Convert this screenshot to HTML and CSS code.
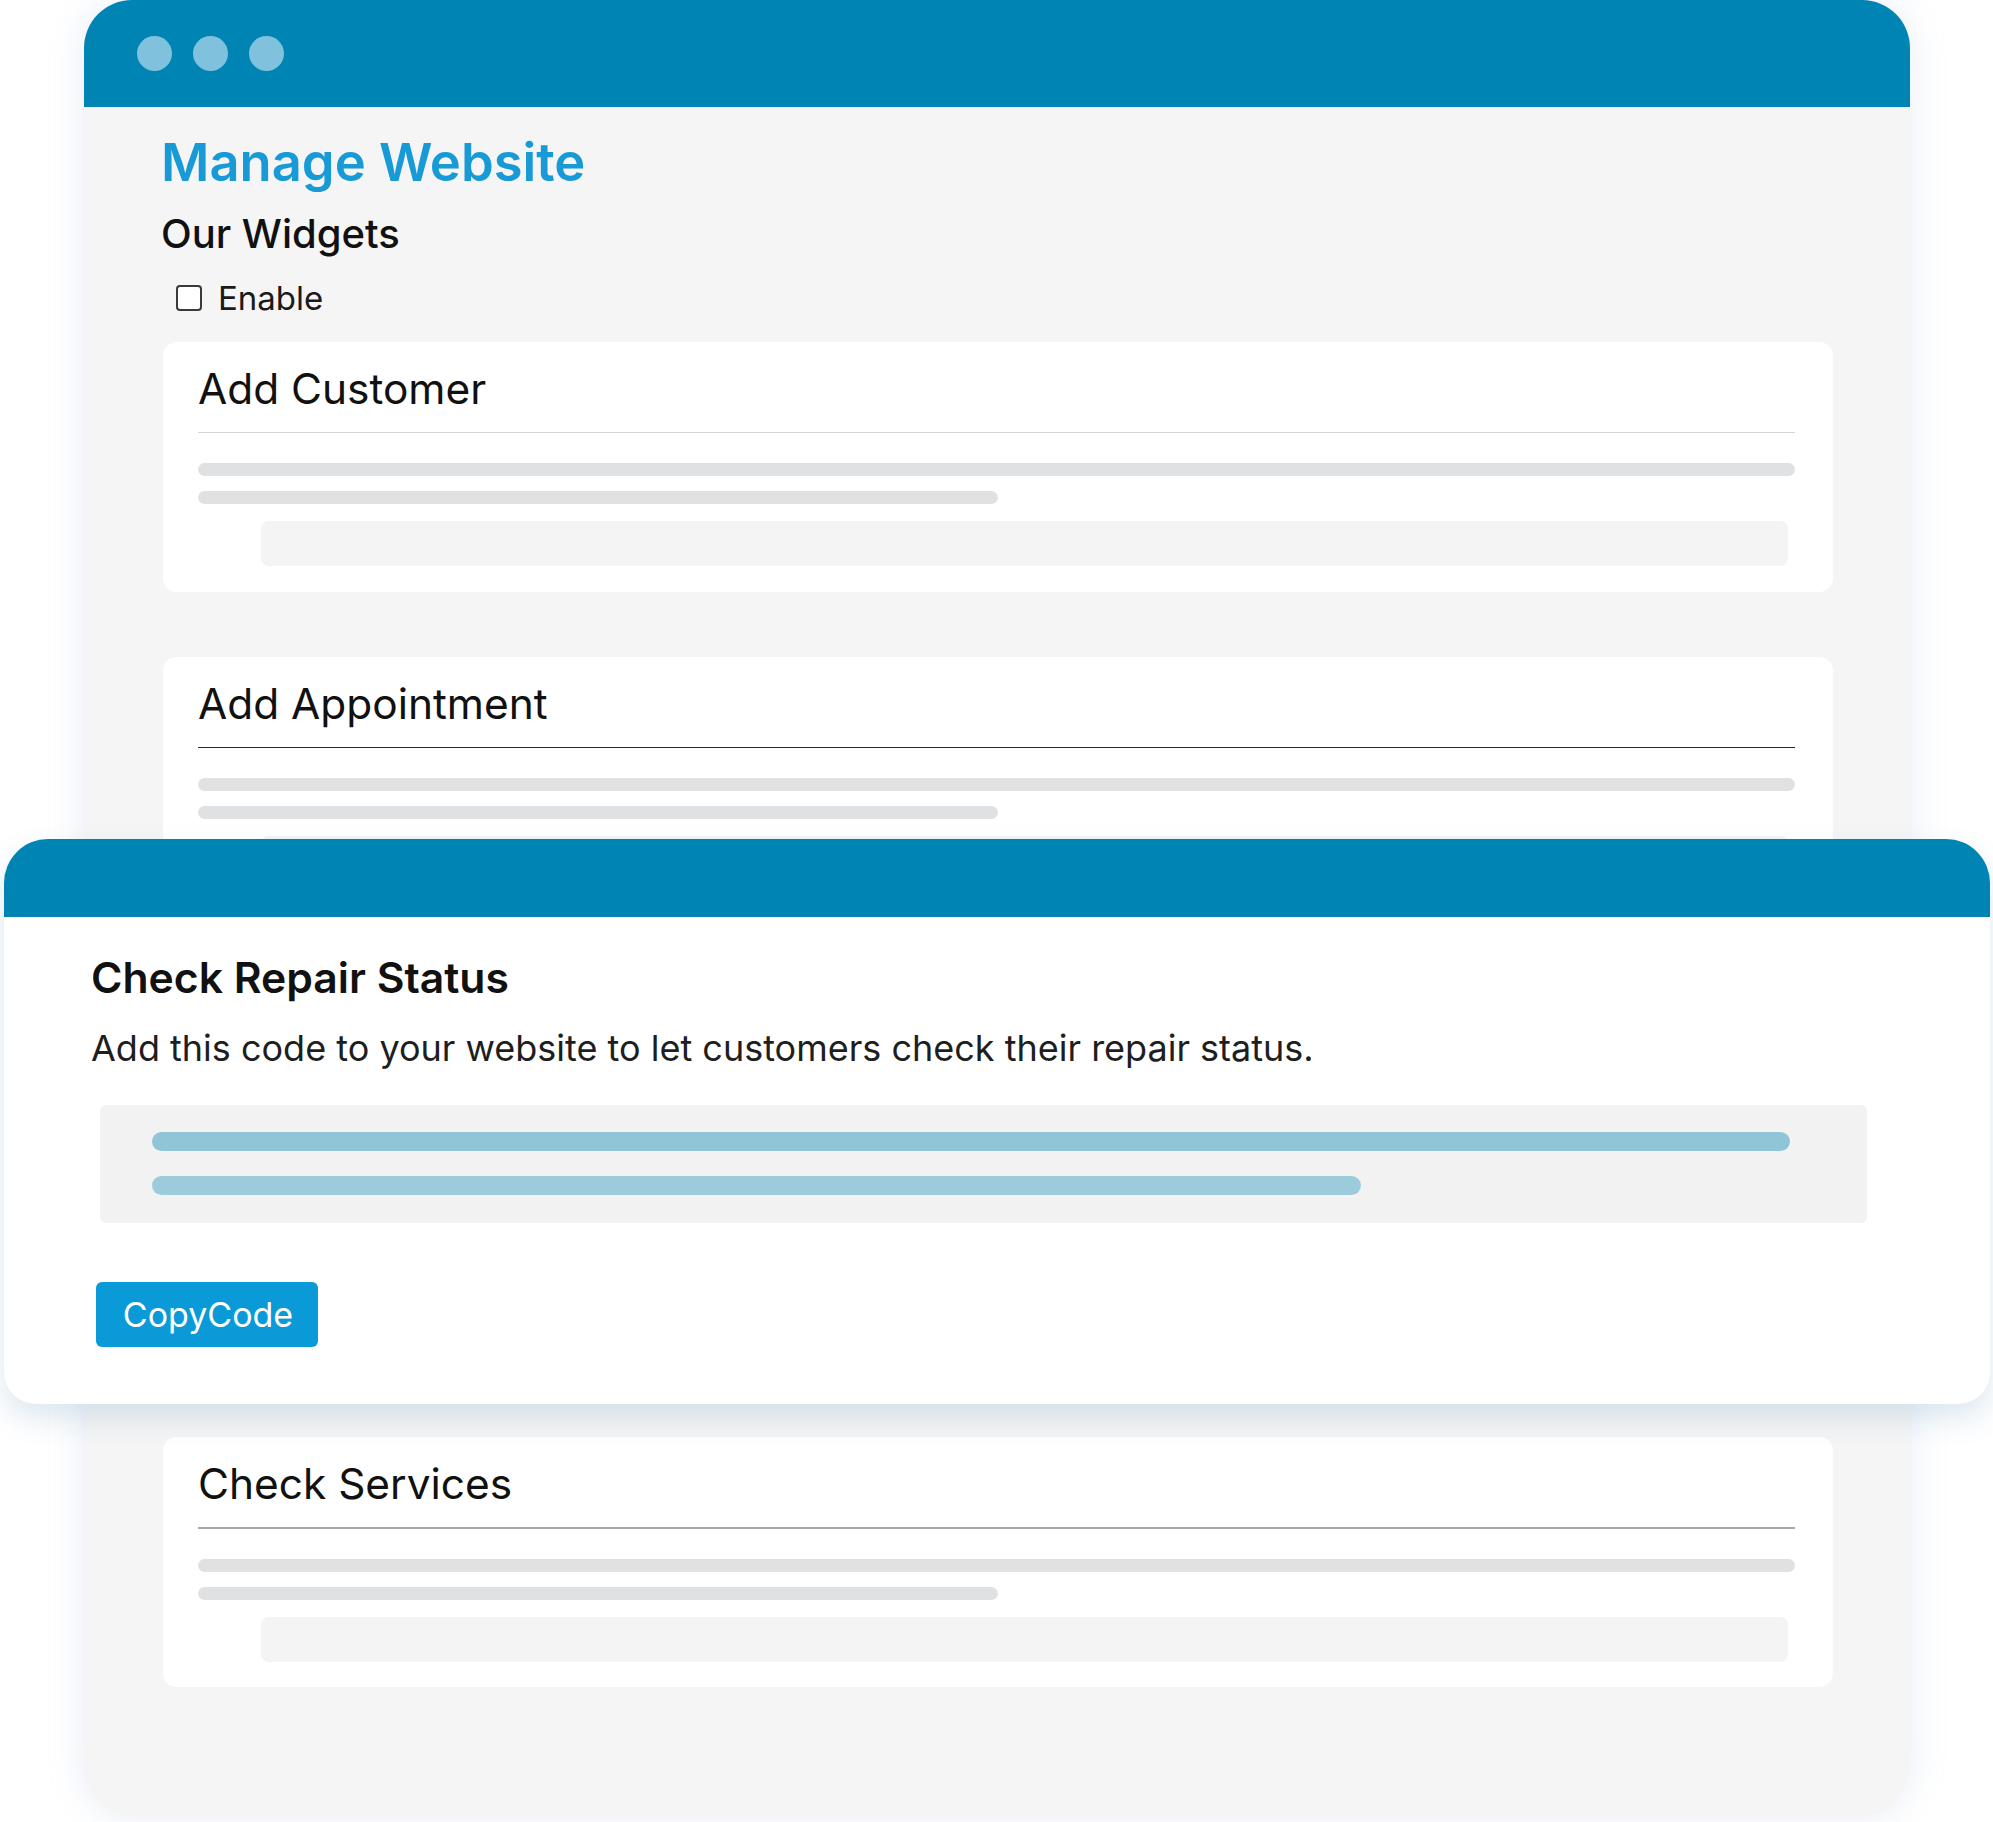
FILE: index.html
```html
<!DOCTYPE html>
<html lang="en">
<head>
<meta charset="utf-8">
<title>Manage Website</title>
<link rel="stylesheet" href="styles.css">
</head>
<body>
<div class="stage">
  <div class="back-window">
    <div class="win-header">
      <span class="dot"></span><span class="dot"></span><span class="dot"></span>
    </div>
    <div class="back-body">
      <h1 class="title">Manage Website</h1>
      <h2 class="subtitle">Our Widgets</h2>
      <label class="enable-row"><span class="checkbox"></span><span>Enable</span></label>

      <div class="card card-first">
        <h3 class="card-title">Add Customer</h3>
        <div class="divider divider-light"></div>
        <div class="bar bar-full"></div>
        <div class="bar bar-half"></div>
        <div class="field"></div>
      </div>

      <div class="card card-second">
        <h3 class="card-title">Add Appointment</h3>
        <div class="divider divider-dark"></div>
        <div class="bar bar-full"></div>
        <div class="bar bar-half"></div>
        <div class="field"></div>
      </div>

      <div class="card card-third">
        <h3 class="card-title">Check Services</h3>
        <div class="divider divider-mid"></div>
        <div class="bar bar-full"></div>
        <div class="bar bar-half"></div>
        <div class="field"></div>
      </div>
    </div>
  </div>

  <div class="front-window">
    <div class="front-header"></div>
    <div class="front-body">
      <h2 class="front-title">Check Repair Status</h2>
      <p class="front-desc">Add this code to your website to let customers check their repair status.</p>
      <div class="code-box">
        <div class="code-line code-line-long"></div>
        <div class="code-line code-line-short"></div>
      </div>
      <button class="copy-btn" type="button">CopyCode</button>
    </div>
  </div>
</div>
</body>
</html>
```

FILE: styles.css
```css
* { box-sizing: border-box; }

html, body {
  margin: 0;
  padding: 0;
  background: #ffffff;
}

body {
  font-family: Inter, "Noto Sans", "Liberation Sans", sans-serif;
  color: #111;
}

.stage {
  position: relative;
  width: 1993px;
  height: 1822px;
  overflow: hidden;
  background: #ffffff;
}

/* ---------- back window ---------- */
.back-window {
  margin-left: 84px;
  width: 1826px;
  height: 1817px;
  background: #f5f5f5;
  border-radius: 48px 48px 52px 52px;
  box-shadow: 0 0 36px rgba(150, 175, 215, 0.22);
  overflow: hidden;
  display: flex;
  flex-direction: column;
}

.win-header {
  height: 107px;
  flex: none;
  background: #0084b4;
  display: flex;
  align-items: center;
  gap: 21px;
  padding-left: 53px;
}

.dot {
  width: 35px;
  height: 35px;
  border-radius: 50%;
  background: #80c1dd;
}

.back-body {
  padding: 22px 77px 0 77px;
}

.title {
  margin: 0;
  font-size: 52.5px;
  line-height: 66px;
  font-weight: 600;
  color: #179ad6;
}

.subtitle {
  margin: 15px 0 0;
  font-size: 40px;
  line-height: 48px;
  font-weight: 500;
  color: #111;
}

.enable-row {
  margin-top: 20px;
  height: 40px;
  display: flex;
  align-items: center;
  gap: 16px;
  padding-left: 15px;
  font-size: 33px;
  color: #1a1a1a;
}

.checkbox {
  width: 26px;
  height: 26px;
  border: 2px solid #3a3a3a;
  border-radius: 4px;
  background: #fff;
}

/* ---------- cards ---------- */
.card {
  margin-left: 2px;
  width: 1670px;
  height: 250px;
  background: #ffffff;
  border-radius: 14px;
  padding: 21px 38px 25px 35px;
}

.card-first { margin-top: 24px; }
.card-second { margin-top: 65px; }
.card-third { margin-top: 530px; }

.card-title {
  margin: 0 0 17px;
  font-size: 42.4px;
  line-height: 52px;
  font-weight: 400;
  color: #111;
}

.divider { height: 1px; }
.divider-light { background: #d6d6d8; }
.divider-dark { background: #2a2a2a; }
.divider-mid { height: 2px; background: #a8a8a8; }

.bar {
  height: 13px;
  border-radius: 7px;
  background: #e0e1e2;
}

.bar-full { margin-top: 30px; width: 100%; }
.bar-half { margin-top: 15px; width: 800px; }

.field {
  margin: 17px 7px 0 63px;
  height: 45px;
  border-radius: 8px;
  background: #f4f4f5;
}

/* ---------- front window ---------- */
.front-window {
  position: absolute;
  left: 4px;
  top: 839px;
  width: 1986px;
  height: 565px;
  background: #ffffff;
  border-radius: 44px 44px 32px 32px;
  box-shadow: 0 14px 30px rgba(40, 110, 160, 0.16);
  overflow: hidden;
}

.front-header {
  height: 78px;
  background: #0084b4;
}

.front-body {
  padding: 36px 0 0 87px;
}

.front-title {
  margin: 0;
  font-size: 42.7px;
  line-height: 50px;
  font-weight: 600;
  color: #111;
}

.front-desc {
  margin: 23px 0 0;
  font-size: 36px;
  line-height: 44px;
  font-weight: 400;
  color: #1e1e1e;
}

.code-box {
  margin: 35px 0 0 9px;
  width: 1767px;
  height: 118px;
  border-radius: 6px;
  background: #f2f2f2;
  padding: 27px 0 0 52px;
  display: flex;
  flex-direction: column;
  gap: 25px;
}

.code-line {
  height: 19px;
  border-radius: 10px;
}

.code-line-long { width: 1638px; background: #90c5d8; }
.code-line-short { width: 1209px; background: #9ccbdc; }

.copy-btn {
  display: block;
  margin: 59px 0 0 5px;
  width: 222px;
  height: 65px;
  border: none;
  border-radius: 6px;
  background: #0a9ad8;
  color: #ffffff;
  font-family: Inter, "Noto Sans", "Liberation Sans", sans-serif;
  font-size: 34px;
  font-weight: 400;
  padding: 0 0 0 2px;
}
```
